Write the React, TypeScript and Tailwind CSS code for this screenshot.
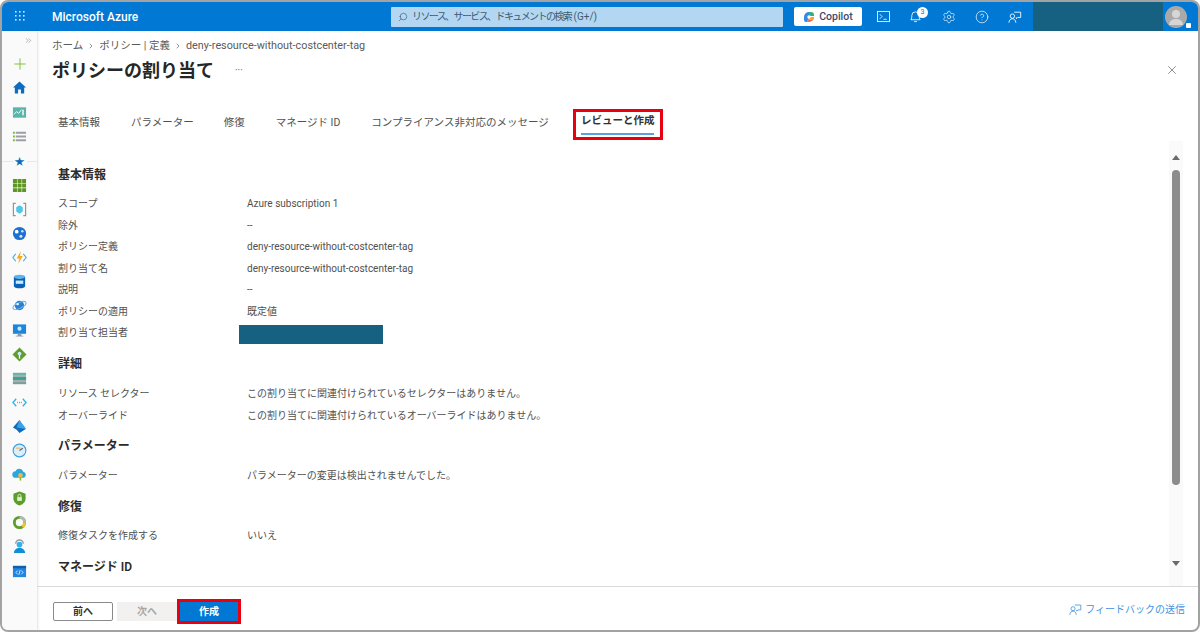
import React from "react";
import { Search, ChevronRight, ChevronsRight, X, Settings, CircleHelp, Plus } from "lucide-react";

function Feedback({ className, color }: { className?: string; color: string }) {
  return (
    <svg viewBox="0 0 16 16" className={className} fill="none" stroke={color} strokeWidth="1">
      <path d="M7 2.500h7.500v6H11l-1.500 1.500V8.500" />
      <circle cx="5" cy="7" r="2.500" />
      <path d="M1 14.500c.4-2.800 1.800-4.500 4-4.500s3.600 1.700 4 4.500" />
    </svg>
  );
}

function Row({ label, children }: { label: string; children?: React.ReactNode }) {
  return (
    <div className="flex h-[21.5px] items-center">
      <div className="w-[189px] shrink-0">{label}</div>
      <div>{children}</div>
    </div>
  );
}

function Head({ children, className }: { children: React.ReactNode; className: string }) {
  return <div className={`flex h-5 items-center text-[12px] font-semibold text-[#2b2b2b] ${className}`}>{children}</div>;
}

const navIcons: React.ReactNode[] = [
  <svg key="a" viewBox="0 0 16 16" className="h-[15px] w-[15px]"><path d="M8 1.500 1 8h2v6.500h3.500V10h3v4.500H13V8h2z" fill="#0f6cbd" /></svg>,
  <svg key="b" viewBox="0 0 16 16" className="h-[15px] w-[15px]"><rect x="1" y="2.500" width="14" height="11" fill="#59b4a9" /><path d="M2 10l3-3 2 2 3-4" stroke="#fff" fill="none" /><rect x="11" y="5" width="1.500" height="6" fill="#fff" /></svg>,
  <svg key="c" viewBox="0 0 16 16" className="h-[15px] w-[15px]"><path d="M1 3h2v2H1zM1 7h2v2H1zM1 11h2v2H1z" fill="#76bc2d" /><path d="M4 3h11v2H4zM4 7h11v2H4zM4 11h11v2H4z" fill="#9aa0a6" /></svg>,
];

const nav2: React.ReactNode[] = [
  <svg viewBox="0 0 16 16" className="h-[15px] w-[15px]" fill="#5e9624"><path d="M1 1h4.300v4.300H1zM5.900 1h4.300v4.300H5.900zM10.800 1H15v4.300h-4.200zM1 5.900h4.300v4.300H1zM5.900 5.900h4.300v4.300H5.900zM10.800 5.900H15v4.300h-4.200zM1 10.800h4.300V15H1zM5.900 10.800h4.300V15H5.900zM10.800 10.800H15V15h-4.200z" /></svg>,
  <svg viewBox="0 0 16 16" className="h-[15px] w-[15px]" fill="none"><path d="M4 1.500H1.500v13H4M12 1.500h2.500v13H12" stroke="#949494" strokeWidth="1.300" /><path d="M8 3.500l3.500 2v4.500L8 12.500 4.500 10V5.500z" fill="#50c7e8" /></svg>,
  <svg viewBox="0 0 16 16" className="h-[15px] w-[15px]"><circle cx="8" cy="8" r="7" fill="#1d6fd0" /><circle cx="5" cy="6" r="2" fill="#fff" /><circle cx="11" cy="5.500" r="1.300" fill="#cfe7fb" /><circle cx="9.500" cy="11" r="1.600" fill="#cfe7fb" /></svg>,
  <svg viewBox="0 0 16 16" className="h-[15px] w-[15px]" fill="none"><path d="M4 4 1 8l3 4M12 4l3 4-3 4" stroke="#3cb4e8" strokeWidth="1.300" /><path d="M9.500 1 5 9h3l-1.500 6L11.500 6.500h-3z" fill="#f7a81b" /></svg>,
  <svg viewBox="0 0 16 16" className="h-[15px] w-[15px]"><path d="M2 3v10c0 1.300 2.700 2.300 6 2.300s6-1 6-2.300V3z" fill="#0a62b8" /><ellipse cx="8" cy="3" rx="6" ry="2.200" fill="#5ab5ea" /><rect x="4" y="7" width="8" height="3.500" fill="#cfe7fb" /></svg>,
  <svg viewBox="0 0 16 16" className="h-[15px] w-[15px]" fill="none"><circle cx="8" cy="8" r="5" fill="#2d7dd2" /><ellipse cx="8" cy="8" rx="7.500" ry="3" transform="rotate(-25 8 8)" stroke="#5ab5ea" strokeWidth="1.100" /><circle cx="6" cy="6.500" r="1.300" fill="#fff" /></svg>,
  <svg viewBox="0 0 16 16" className="h-[15px] w-[15px]"><rect x="1" y="1.500" width="14" height="10" fill="#1b86dc" /><circle cx="8" cy="6" r="2.200" fill="#cdeafc" /><path d="M6 11.500h4v2h2v1H4v-1h2z" fill="#8d9aa5" /></svg>,
  <svg viewBox="0 0 16 16" className="h-[15px] w-[15px]"><path d="M8 .5 15.500 8 8 15.500.5 8z" fill="#5e9e2a" /><circle cx="8" cy="7" r="2" fill="#cdeafc" /><path d="M7.300 8.500h1.400v4H7.300z" fill="#fff" /></svg>,
  <svg viewBox="0 0 16 16" className="h-[15px] w-[15px]"><rect x="1" y="2" width="14" height="12" fill="#9fb2b2" /><rect x="1" y="2" width="14" height="2" fill="#5fb7a7" /><rect x="1" y="6.500" width="14" height="3" fill="#3ba08d" /><rect x="1" y="12" width="14" height="2" fill="#7f9a97" /></svg>,
  <svg viewBox="0 0 16 16" className="h-[15px] w-[15px]" fill="none"><path d="M4.500 4 1 8l3.500 4M11.500 4 15 8l-3.500 4" stroke="#35b0ea" strokeWidth="1.400" /><path d="M5.500 8h1M7.500 8h1M9.500 8h1" stroke="#76bc2d" strokeWidth="1.400" /></svg>,
  <svg viewBox="0 0 16 16" className="h-[15px] w-[15px]"><path d="M8 1 1 9l4 2.500L8 15l7-4.500-3.500-1.500z" fill="#0f6cbd" /><path d="M8 1 5 9l6 1 4 .5z" fill="#3aa0e8" /></svg>,
  <svg viewBox="0 0 16 16" className="h-[15px] w-[15px]" fill="none"><circle cx="8" cy="8" r="6.800" fill="#d9effc" stroke="#3f9de0" strokeWidth="1.200" /><path d="M8 8l3.500-2.500" stroke="#5b6770" strokeWidth="1.300" /><path d="M4 5.500h5" stroke="#f2a33a" /></svg>,
  <svg viewBox="0 0 16 16" className="h-[15px] w-[15px]"><path d="M4 11.500a3.500 3.500 0 0 1-.3-7A4.500 4.500 0 0 1 12 5a3.300 3.300 0 0 1 0 6.500z" fill="#29a8e0" /><circle cx="9" cy="9" r="2.500" fill="#f7b733" /><path d="M8.200 11h1.600v3.500H8.200z" fill="#76bc2d" /></svg>,
  <svg viewBox="0 0 16 16" className="h-[15px] w-[15px]"><path d="M8 .5 14.500 3v5c0 3.700-2.800 6.200-6.500 7.500C4.300 14.200 1.500 11.700 1.500 8V3z" fill="#5b9e2b" /><rect x="5.500" y="6.500" width="5" height="4" fill="#dff2c4" /><path d="M6.500 6.500V5a1.500 1.500 0 0 1 3 0v1.500" stroke="#dff2c4" fill="none" /></svg>,
  <svg viewBox="0 0 16 16" className="h-[15px] w-[15px]" fill="none"><circle cx="8" cy="8" r="5.500" stroke="#5b9e2b" strokeWidth="3" /><path d="M8 2.500A5.500 5.500 0 0 1 13.500 8" stroke="#b8b8b8" strokeWidth="3" /><path d="M13.500 8A5.500 5.500 0 0 1 11 12.500" stroke="#f4c430" strokeWidth="3" /><circle cx="8" cy="8" r="2" fill="#fff" /></svg>,
  <svg viewBox="0 0 16 16" className="h-[15px] w-[15px]"><path d="M4 5a4 4 0 0 1 8 0" stroke="#8d9aa5" strokeWidth="1.500" fill="none" /><circle cx="8" cy="6" r="3" fill="#35b0ea" /><path d="M2 15c0-3.300 2.500-5.500 6-5.500s6 2.200 6 5.500z" fill="#0f8fd8" /></svg>,
  <svg viewBox="0 0 16 16" className="h-[15px] w-[15px]" fill="none"><rect x="1" y="2" width="14" height="12" fill="#2285e0" /><rect x="1" y="2" width="14" height="2.500" fill="#125ea8" /><path d="M6 7 4.200 9 6 11M10 7l1.800 2-1.800 2M8.700 6.500 7.300 11.500" stroke="#fff" strokeWidth=".8" /></svg>,
];

export default function App() {
  return (
    <div
      className="flex h-[632px] w-[1200px] flex-col overflow-hidden rounded-[8px] border-2 border-[#a3a3a3] bg-white text-[10px] text-[#505050]"
      style={{ fontFamily: 'Roboto, "Noto Sans CJK JP", sans-serif' }}
    >
      <header className="flex h-[29px] shrink-0 items-center bg-[#0078d4] text-white">
        <div className="flex w-[36px] justify-center">
          <svg viewBox="0 0 11 11" className="h-[11px] w-[11px]" fill="#cfe6f7">
            {[0, 4, 8].flatMap((x) => [0, 4, 8].map((y) => <rect key={`${x}-${y}`} x={x} y={y} width="1.600" height="1.600" />))}
          </svg>
        </div>
        <div className="ml-[14px] w-[339px] text-[12px] font-medium">Microsoft Azure</div>
        <div className="flex h-[20px] w-[392px] items-center gap-[4px] rounded-[1px] bg-[#b3d7f2] pl-[7px] text-[#3d5a70]">
          <Search className="h-[10px] w-[10px] scale-x-[-1]" strokeWidth={1.5} />
          <span><span className="tracking-[-1.6px]">リソース、サービス、ドキュメントの検索</span> (G+/)</span>
        </div>
        <div className="ml-[11px] flex h-[19px] w-[68px] items-center justify-center gap-[4px] rounded-[2px] bg-white text-[10.5px] font-medium text-[#3b4a6b]">
          <svg viewBox="0 0 12 12" className="h-[12px] w-[12px]">
            <path d="M1 6a5 5 0 0 1 5-5h2L4 11H3a2 2 0 0 1-2-2z" fill="#2f8be6" />
            <path d="M6 1h2a3 3 0 0 1 3 3v1H6z" fill="#32b27b" />
            <path d="M11 6a5 5 0 0 1-5 5H4l2-5z" fill="#ef6a5a" />
            <path d="M6 6h5v1a2 2 0 0 1-2 2H5z" fill="#f5a623" />
            <circle cx="6" cy="6" r="1.700" fill="#fff" />
          </svg>
          Copilot
        </div>
        <div className="ml-[4px] flex w-[34px] justify-center">
          <svg viewBox="0 0 14 14" className="h-[13px] w-[13px]" fill="none" stroke="#fff" strokeWidth=".9">
            <rect x=".5" y="1.500" width="13" height="11" />
            <path d="M3 4.500 5.500 7 3 9.500M7 10h3.500" />
          </svg>
        </div>
        <div className="relative flex w-[32px] justify-center pr-[2px]">
          <svg viewBox="0 0 14 14" className="h-[13px] w-[13px]" fill="none" stroke="#fff" strokeWidth=".9">
            <path d="M2 10.500c1-1 1-2.500 1-4.500a4 4 0 0 1 8 0c0 2 0 3.500 1 4.500zM5.500 12.500h3" />
          </svg>
          <span className="absolute left-[17px] top-[-3px] flex h-[11px] w-[11px] items-center justify-center rounded-full bg-white text-[7px] text-[#0078d4]">3</span>
        </div>
        <div className="flex w-[33px] justify-center"><Settings className="h-[14px] w-[14px]" strokeWidth={1.1} /></div>
        <div className="flex w-[33px] justify-center"><CircleHelp className="h-[14px] w-[14px]" strokeWidth={1.2} /></div>
        <div className="flex w-[33px] justify-center"><Feedback className="h-[14px] w-[14px]" color="#fff" /></div>
        <div className="ml-[2px] h-[29px] w-[130px] bg-[#166082]" />
        <div className="relative ml-[2px] h-[22px] w-[22px] rounded-full bg-[#a9a9a9]">
          <div className="mx-auto mt-[4px] h-[8px] w-[8px] rounded-full bg-[#d6d6d6]" />
          <div className="mx-auto mt-[1px] h-[6px] w-[14px] rounded-t-full bg-[#d6d6d6]" />
          <div className="absolute bottom-0 right-[-4px] h-[5px] w-[5px] rounded-[1px] bg-white" />
        </div>
      </header>

      <div className="flex min-h-0 flex-1">
        <aside className="flex w-[35px] shrink-0 flex-col items-center bg-[#fafafa] pt-[5px] shadow-[1px_0_2px_rgba(0,0,0,0.12)]">
          <ChevronsRight className="ml-[17px] h-[9px] w-[9px] text-[#808080]" strokeWidth={1.5} />
          <Plus className="mt-[10px] h-[18px] w-[18px] text-[#76bc2d]" strokeWidth={1.2} />
          <div className="mt-[7px] flex flex-col items-center gap-[9.5px]">{navIcons}</div>
          <div className="mt-[11px] flex h-[13px] w-full items-center justify-center bg-[linear-gradient(#0000_6px,#e8e8e8_6px,#e8e8e8_7px,#0000_7px)]">
            <span className="bg-[#fafafa] px-[2px] text-[10px] leading-none text-[#0f6cbd]">★</span>
          </div>
          <div className="mt-[10px] flex flex-col items-center gap-[9.1px]">
            {nav2.map((icon, i) => <div key={i} className="flex h-[15px] items-center">{icon}</div>)}
          </div>
        </aside>

        <main className="flex min-w-0 flex-1 flex-col">
          <div className="flex h-[23px] items-end gap-[4px] pb-[1px] pl-[15px] text-[10.5px] leading-[14px] text-[#5a5a5a]">
            <span>ホーム</span>
            <ChevronRight className="mb-[3px] h-[8px] w-[8px]" />
            <span>ポリシー | 定義</span>
            <ChevronRight className="mb-[3px] h-[8px] w-[8px]" />
            <span className="text-[10.8px]">deny-resource-without-costcenter-tag</span>
          </div>
          <div className="flex h-[32px] items-center pl-[15px] pr-[19px]">
            <h1 className="text-[18px] font-semibold text-[#262626]">ポリシーの割り当て</h1>
            <span className="ml-[21px] text-[10px] text-[#666]">···</span>
            <X className="ml-auto h-[14px] w-[14px] text-[#555]" strokeWidth={1.1} />
          </div>

          <nav className="mt-[23px] flex h-[32px] items-start pl-[21px] text-[10.5px] text-[#505050]">
            <span className="mt-[6px]">基本情報</span>
            <span className="ml-[31px] mt-[6px]">パラメーター</span>
            <span className="ml-[30px] mt-[6px]">修復</span>
            <span className="ml-[31px] mt-[6px]">マネージド ID</span>
            <span className="ml-[31px] mt-[6px]">コンプライアンス非対応のメッセージ</span>
            <div className="ml-[24px] flex h-[31px] w-[90px] flex-col items-center border-[3px] border-[#e8000f] pt-[1px] font-semibold text-[#333]">
              <span className="leading-[15px]">レビューと作成</span>
              <div className="mt-[5px] h-[2px] w-[73px] bg-[#5a9fe0]" />
            </div>
          </nav>

          <div className="flex min-h-0 flex-1">
            <section className="min-w-0 flex-1 overflow-hidden pl-[21px] pt-[24px]">
              <Head className="">基本情報</Head>
              <div className="mt-[8px]">
                <Row label="スコープ">Azure subscription 1</Row>
                <Row label="除外">--</Row>
                <Row label="ポリシー定義">deny-resource-without-costcenter-tag</Row>
                <Row label="割り当て名">deny-resource-without-costcenter-tag</Row>
                <Row label="説明">--</Row>
                <Row label="ポリシーの適用">既定値</Row>
                <Row label="割り当て担当者"><div className="ml-[-8px] mt-[3px] h-[19px] w-[144px] bg-[#166082]" /></Row>
              </div>
              <Head className="mt-[10.5px]">詳細</Head>
              <div className="mt-[9px]">
                <Row label="リソース セレクター">この割り当てに関連付けられているセレクターはありません。</Row>
                <Row label="オーバーライド">この割り当てに関連付けられているオーバーライドはありません。</Row>
              </div>
              <Head className="mt-[10px]">パラメーター</Head>
              <div className="mt-[9px]">
                <Row label="パラメーター">パラメーターの変更は検出されませんでした。</Row>
              </div>
              <Head className="mt-[10.5px]">修復</Head>
              <div className="mt-[8px]">
                <Row label="修復タスクを作成する">いいえ</Row>
              </div>
              <Head className="mt-[10px]">マネージド ID</Head>
            </section>
            <div className="mr-[15px] flex w-[14px] shrink-0 flex-col items-center bg-[#fafafa]">
              <div className="mt-[14px] h-0 w-0 border-x-[4px] border-b-[5px] border-x-transparent border-b-[#6b6b6b]" />
              <div className="mt-[10px] h-[315px] w-[8px] rounded-full bg-[#8c8c8c]" />
              <div className="mt-auto mb-[20px] h-0 w-0 border-x-[4px] border-t-[5px] border-x-transparent border-t-[#6b6b6b]" />
            </div>
          </div>

          <footer className="flex h-[44px] shrink-0 items-center border-t border-[#d9d9d9] pl-[16px] pr-[13px] pt-[6px]">
            <button className="h-[19px] w-[60px] rounded-[2px] border border-[#8a8a8a] bg-white font-semibold text-[#333]">前へ</button>
            <button className="ml-[4px] h-[19px] w-[60px] bg-[#f2f1f0] font-semibold text-[#a6a6a6]">次へ</button>
            <div className="border-[3px] border-[#e8000f]">
              <button className="block h-[19px] w-[58px] bg-[#0078d4] font-semibold text-white">作成</button>
            </div>
            <div className="mb-[4px] ml-auto flex items-center gap-[3px] text-[#3f93e0]">
              <Feedback className="h-[13px] w-[13px]" color="#3f93e0" />
              フィードバックの送信
            </div>
          </footer>
        </main>
      </div>
    </div>
  );
}
